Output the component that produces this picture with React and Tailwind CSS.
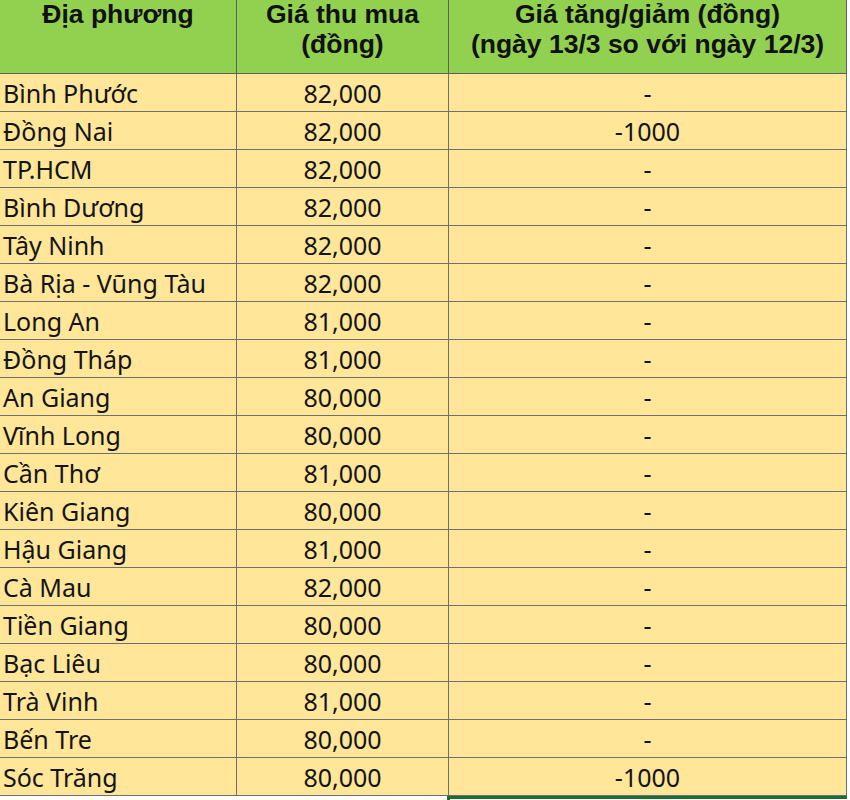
const rows = [
  ['Bình Phước', '82,000', '-'],
  ['Đồng Nai', '82,000', '-1000'],
  ['TP.HCM', '82,000', '-'],
  ['Bình Dương', '82,000', '-'],
  ['Tây Ninh', '82,000', '-'],
  ['Bà Rịa - Vũng Tàu', '82,000', '-'],
  ['Long An', '81,000', '-'],
  ['Đồng Tháp', '81,000', '-'],
  ['An Giang', '80,000', '-'],
  ['Vĩnh Long', '80,000', '-'],
  ['Cần Thơ', '81,000', '-'],
  ['Kiên Giang', '80,000', '-'],
  ['Hậu Giang', '81,000', '-'],
  ['Cà Mau', '82,000', '-'],
  ['Tiền Giang', '80,000', '-'],
  ['Bạc Liêu', '80,000', '-'],
  ['Trà Vinh', '81,000', '-'],
  ['Bến Tre', '80,000', '-'],
  ['Sóc Trăng', '80,000', '-1000'],
];

const headCell = "h-[74px] bg-[#92d050] border-r border-b border-[#5f5f5f] text-center font-['Liberation_Sans',Arial,sans-serif] font-bold text-[26.5px] text-[#111]";

export default function App() {
  return (
    <div className="w-[850px] h-[800px] overflow-hidden bg-white">
      <div className="grid grid-cols-[237px_212px_398px] w-[847px]">
        {/* Header */}
        <div className={headCell}>
          <div className="leading-[29px]">Địa phương</div>
        </div>
        <div className={headCell}>
          <div className="leading-[29px]">Giá thu mua</div>
          <div className="leading-[31px]">(đồng)</div>
        </div>
        <div className={headCell}>
          <div className="leading-[29px]">Giá tăng/giảm (đồng)</div>
          <div className="leading-[31px]">(ngày 13/3 so với ngày 12/3)</div>
        </div>

        {/* Data rows */}
        {rows.map(([place, price, change]) => (
          <div key={place} className="contents font-['Noto_Sans','Open_Sans',sans-serif] text-[25px] text-[#141414]">
            <div className="h-[38px] bg-[#ffe699] border-r border-b border-[#6f6f6f] pl-[3px] flex items-center pt-[2px] whitespace-nowrap">
              {place}
            </div>
            <div className="h-[38px] bg-[#ffe699] border-r border-b border-[#6f6f6f] flex items-center justify-center pt-[2px]">
              {price}
            </div>
            <div className="h-[38px] bg-[#ffe699] border-r border-b border-[#6f6f6f] flex items-center justify-center pt-[2px]">
              {change}
            </div>
          </div>
        ))}

        {/* selected cell edge */}
        <div className="h-[6px]" />
        <div className="h-[6px]" />
        <div className="h-[6px] border-t-[3px] border-l-[3px] border-[#1e6b33] -ml-[2px]" />
      </div>
    </div>
  );
}
